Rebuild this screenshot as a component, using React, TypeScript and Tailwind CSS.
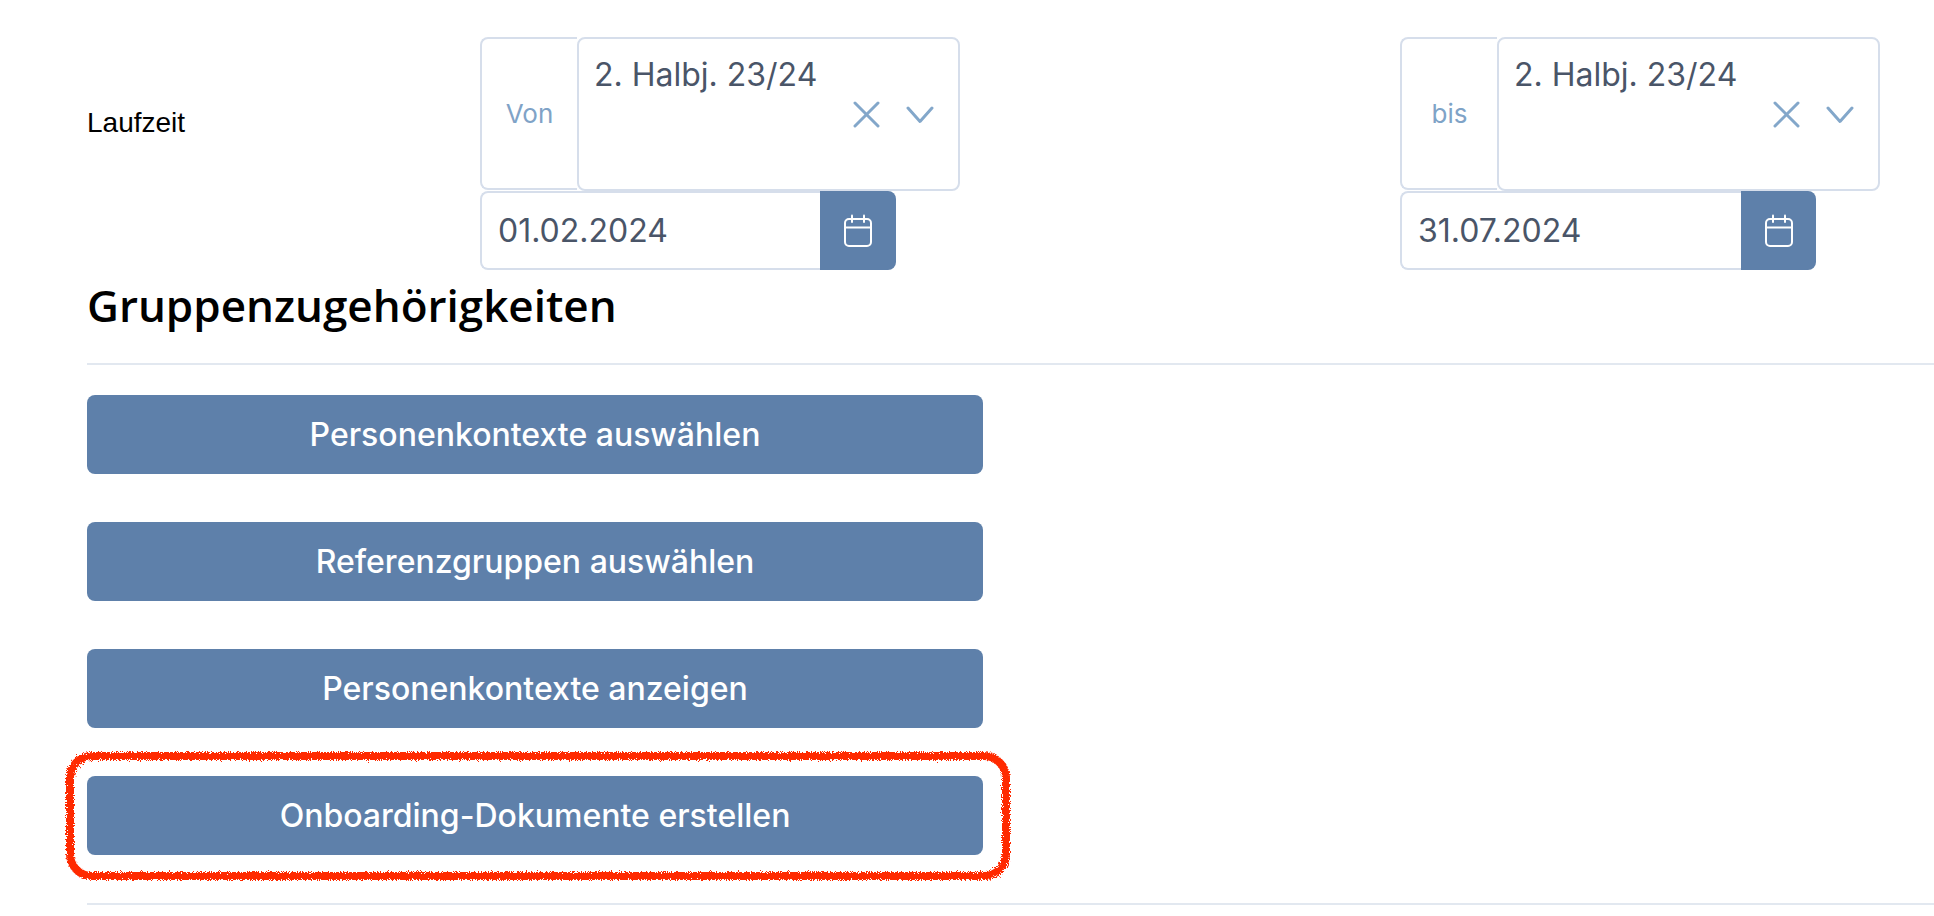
const INTER = "font-['Inter',sans-serif]";

const BUTTONS = [
  'Personenkontexte auswählen',
  'Referenzgruppen auswählen',
  'Personenkontexte anzeigen',
  'Onboarding-Dokumente erstellen',
];

function CalendarIcon() {
  return (
    <svg width="30" height="34" viewBox="0 0 30 34" fill="none" stroke="#ffffff" strokeWidth="2" strokeLinecap="round">
      <rect x="2" y="5" width="26" height="27" rx="4" />
      <path d="M2 13.5H28" />
      <path d="M9 1.5V8" />
      <path d="M21 1.5V8" />
    </svg>
  );
}

function ClearIcon() {
  return (
    <svg width="27" height="27" viewBox="0 0 27 27" fill="none" stroke="#83a7ca" strokeWidth="3" strokeLinecap="round">
      <path d="M2 2L25 25" />
      <path d="M25 2L2 25" />
    </svg>
  );
}

function ChevronIcon() {
  return (
    <svg width="28" height="18" viewBox="0 0 28 18" fill="none" stroke="#83a7ca" strokeWidth="3" strokeLinecap="round" strokeLinejoin="round">
      <path d="M2 2L14 15.5L26 2" />
    </svg>
  );
}

function DateField({ label, date, buttonWidth }: { label: string; date: string; buttonWidth: string }) {
  return (
    <div className="w-[480px] flex-shrink-0">
      <div className="flex h-[154px]">
        <div className="w-[97px] h-[153px] flex items-center justify-center border-2 border-r-0 border-[#d6deeb] rounded-l-lg text-[26px] text-[#7fa3c7]">
          {label}
        </div>
        <div className="w-[383px] relative border-2 border-[#d6deeb] rounded-lg pl-[15px] pt-[15px] text-[32px] leading-[42px] text-[#4a5568] bg-white">
          2. Halbj. 23/24
          <div className="absolute right-[24px] top-[62px] flex items-center gap-[26px]">
            <ClearIcon />
            <ChevronIcon />
          </div>
        </div>
      </div>
      <div className="flex h-[79px] w-[416px]">
        <div className="flex-1 flex items-center border-2 border-r-0 border-[#d6deeb] rounded-l-lg pl-[16px] text-[32px] text-[#4a5568]">
          {date}
        </div>
        <div className={`${buttonWidth} bg-[#5e80aa] rounded-r-lg flex items-center justify-center`}>
          <CalendarIcon />
        </div>
      </div>
    </div>
  );
}

export default function App() {
  return (
    <div className={`h-[916px] overflow-hidden bg-white pl-[87px] pt-[37px] ${INTER}`}>
      {/* Laufzeit */}
      <div className="flex">
        <div className="w-[393px] flex-shrink-0 pt-[68px] font-['Liberation_Sans',sans-serif] text-[28px] leading-[36px] text-black">
          Laufzeit
        </div>
        <DateField label="Von" date="01.02.2024" buttonWidth="w-[76px]" />
        <div className="w-[440px] flex-shrink-0" />
        <DateField label="bis" date="31.07.2024" buttonWidth="w-[75px]" />
      </div>

      {/* Gruppenzugehörigkeiten */}
      <h2 className="h-[85px] pt-[8px] font-['Open_Sans',sans-serif] font-semibold text-[44px] leading-[54px] text-black border-b-2 border-[#e2e8f0] box-content">
        Gruppenzugehörigkeiten
      </h2>
      <div className="pt-[30px] border-b-2 border-[#e2e8f0] pb-[48px] w-full">
        <div className="flex flex-col gap-[48px] w-[896px]">
          {BUTTONS.map((text, idx) => (
            <div key={text} className="relative">
              <button className="w-full h-[79px] bg-[#5e80aa] rounded-lg text-white text-[32px] font-medium">
                {text}
              </button>
              {idx === BUTTONS.length - 1 && (
                <svg className="absolute left-[-22px] top-[-25px]" width="946" height="130" viewBox="0 0 946 130" fill="none">
                  <filter id="rough">
                    <feTurbulence type="fractalNoise" baseFrequency="0.9" numOctaves="3" />
                    <feDisplacementMap in="SourceGraphic" scale="7" />
                  </filter>
                  <rect x="5" y="5" width="936" height="120" rx="22" stroke="#ff2a00" strokeWidth="8" filter="url(#rough)" />
                </svg>
              )}
            </div>
          ))}
        </div>
      </div>
    </div>
  );
}
